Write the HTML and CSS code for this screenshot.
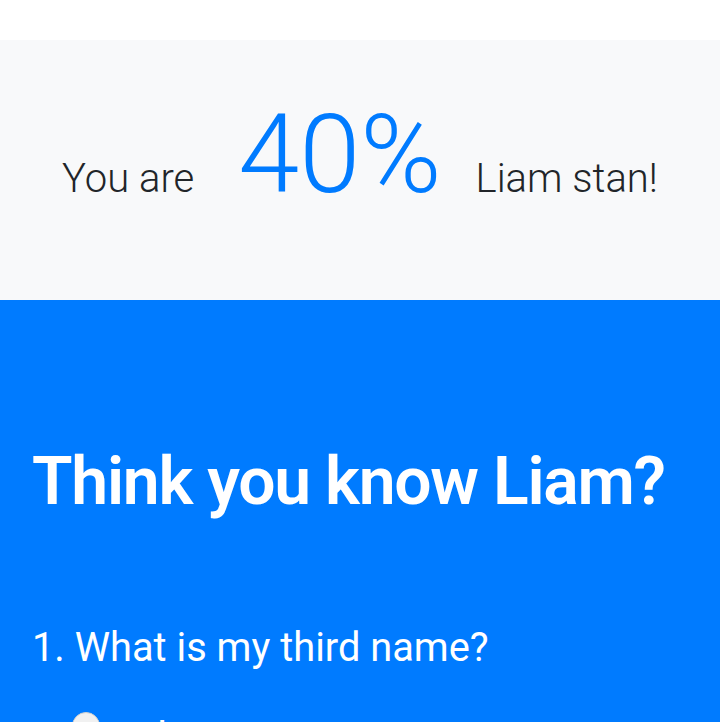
FILE: index.html
```html
<!DOCTYPE html>
<html lang="en">
<head>
<meta charset="utf-8">
<title>Think you know Liam?</title>
<link rel="stylesheet" href="styles.css">
</head>
<body>
<div class="top-space"></div>
<section class="score">
  <div class="score-row">
    <span class="lead">You are</span>
    <span class="pct">40%</span>
    <span class="lead lead-after">Liam stan!</span>
  </div>
</section>
<section class="quiz">
  <h1 class="quiz-title">Think you know Liam?</h1>
  <p class="question">1. What is my third name?</p>
  <label class="option"><span class="radio"></span><span class="option-text">James</span></label>
</section>
</body>
</html>
```

FILE: styles.css
```css
html, body {
  margin: 0;
  padding: 0;
  background: #ffffff;
  font-family: Roboto, "Liberation Sans", sans-serif;
  color: #212529;
}

.top-space {
  height: 40px;
  background: #ffffff;
}

.score {
  background: #f8f9fa;
  height: 260px;
  box-sizing: border-box;
  padding-bottom: 31px;
  display: flex;
  align-items: center;
  justify-content: center;
}

.score-row {
  display: flex;
  align-items: baseline;
}

.lead {
  font-size: 40px;
  font-weight: 300;
  line-height: 1.2;
  white-space: nowrap;
}

.pct {
  font-size: 110px;
  font-weight: 300;
  line-height: 1;
  color: #007bff;
  margin: 0 34px 0 44px;
}

.quiz {
  background: #007bff;
  color: #ffffff;
  padding: 142px 32px 0;
  height: 600px;
}

.quiz-title {
  margin: 0;
  font-size: 66px;
  font-weight: 600;
  line-height: 1.2;
  letter-spacing: -1.25px;
  white-space: nowrap;
}

.question {
  margin: 103px 0 0;
  font-size: 39.8px;
  font-weight: 400;
  line-height: 1.2;
}

.option {
  display: flex;
  align-items: flex-start;
  gap: 45px;
  margin: 40px 0 0 40px;
  font-size: 40px;
  line-height: 1.2;
}

.radio {
  flex: none;
  width: 28px;
  height: 28px;
  border-radius: 50%;
  background: #f1f1f1;
  border: 1px solid #d0d0d0;
  box-sizing: border-box;
}
```
